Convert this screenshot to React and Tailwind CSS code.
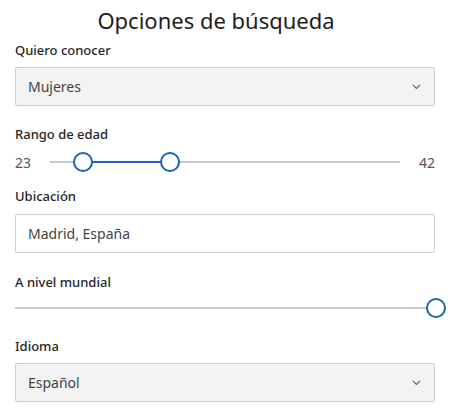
import React from "react";

function Chevron() {
  return (
    <svg width="9" height="6" viewBox="0 0 9 6" className="shrink-0">
      <path d="M1 1 L4.5 4.5 L8 1" fill="none" stroke="#6a6a6a" strokeWidth="1.2" />
    </svg>
  );
}

function Thumb({ className }) {
  return (
    <div
      className={
        "absolute top-1/2 -translate-y-1/2 w-[20px] h-[20px] rounded-full bg-white border-2 border-[#1f62ad] " +
        className
      }
    />
  );
}

const label = "h-[20px] leading-[20px] text-[13px] font-medium text-[#262626]";

export default function App() {
  return (
    <div
      className="w-[450px] h-[410px] bg-white text-[#222] px-[15px] overflow-hidden"
      style={{ fontFamily: '"Noto Sans", "Open Sans", sans-serif' }}
    >
      <h1 className="h-[40px] leading-[40px] text-[22px] font-[430] text-center text-[#1e1e1e] pr-[18px]">
        Opciones de búsqueda
      </h1>

      <div className={label}>Quiero conocer</div>
      <div className="mt-[7px] h-[39px] flex items-center justify-between bg-[#f3f3f3] border border-[#cfcfcf] rounded-[2px] pl-[12px] pr-[13px]">
        <span className="text-[14px] text-[#444]">Mujeres</span>
        <Chevron />
      </div>

      <div className={"mt-[18px] " + label}>Rango de edad</div>
      <div className="mt-[6px] h-[24px] flex items-center text-[14px] text-[#555]">
        <span className="w-[35px]">23</span>
        <div className="relative flex-1 h-[2px] bg-[#c8c8c8]">
          <div className="absolute left-[33px] w-[87px] top-0 h-[2px] bg-[#1f62ad]" />
          <Thumb className="left-[23px]" />
          <Thumb className="left-[110px]" />
        </div>
        <span className="w-[35px] text-right">42</span>
      </div>

      <div className={"mt-[12px] " + label}>Ubicación</div>
      <div className="mt-[8px] h-[39px] flex items-center bg-white border border-[#cfcfcf] rounded-[2px] pl-[12px]">
        <span className="text-[14px] text-[#444]">Madrid, España</span>
      </div>

      <div className={"mt-[19px] " + label}>A nivel mundial</div>
      <div className="mt-[4px] h-[24px] flex items-center">
        <div className="relative flex-1 h-[2px] bg-[#c8c8c8] mr-[-1px]">
          <Thumb className="right-[-10px]" />
        </div>
      </div>

      <div className={"mt-[16px] " + label}>Idioma</div>
      <div className="mt-[7px] h-[39px] flex items-center justify-between bg-[#f3f3f3] border border-[#cfcfcf] rounded-[2px] pl-[12px] pr-[13px]">
        <span className="text-[14px] text-[#444]">Español</span>
        <Chevron />
      </div>
    </div>
  );
}
